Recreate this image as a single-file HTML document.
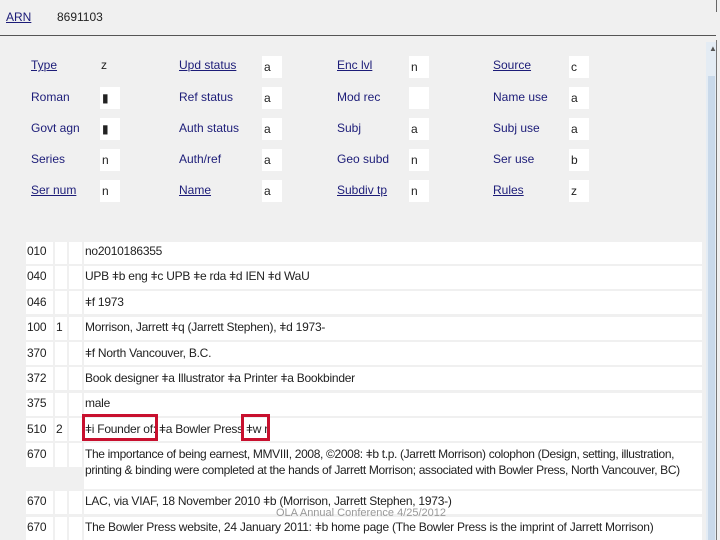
<!DOCTYPE html>
<html><head><meta charset="utf-8"><style>
*{margin:0;padding:0;box-sizing:border-box}
body{width:720px;height:540px;overflow:hidden;background:#f0f0f0;position:relative;font-family:"Liberation Sans",Arial,sans-serif;font-size:12px;color:#222}
.a{position:absolute;white-space:nowrap}
.l{color:#1c1c78}
.u{text-decoration:underline}
.v{position:absolute;background:#fff;width:20px;height:22px;padding:4px 0 0 2px}
.r{position:absolute;left:26px;width:676px;background:#fff}
.c{position:absolute;top:0;bottom:0;background:#f0f0f0;width:2px}
.t{position:absolute;left:26px;width:676px;padding-top:1px}
.t span{position:absolute;white-space:nowrap;letter-spacing:-0.25px}
.red{position:absolute;border:3px solid #c8102e}
</style></head><body>
<div class="a l u" style="left:6px;top:10px">ARN</div>
<div class="a" style="left:57px;top:10px">8691103</div>
<div class="a" style="left:0;top:35px;width:716px;height:1px;background:#555"></div>
<div class="a" style="left:716px;top:0;width:1px;height:12px;background:#666"></div>
<div class="a" style="left:716px;top:40px;width:1px;height:500px;background:#777"></div>
<div class="a" style="left:706px;top:42px;width:10px;height:498px;background:#e4ecf4"></div>
<div class="a" style="left:708px;top:76px;width:7px;height:464px;background:#c9d9ea"></div>
<div class="a" style="left:709px;top:44px;font-size:8px;color:#555">▲</div>

<div class="a l u" style="left:31px;top:58px">Type</div>
<div class="a l" style="left:31px;top:90px">Roman</div>
<div class="a l" style="left:31px;top:121px">Govt agn</div>
<div class="a l" style="left:31px;top:152px">Series</div>
<div class="a l u" style="left:31px;top:183px">Ser num</div>
<div class="a" style="left:101px;top:58px">z</div>
<div class="v" style="left:100px;top:87px">▮</div>
<div class="v" style="left:100px;top:118px">▮</div>
<div class="v" style="left:100px;top:149px">n</div>
<div class="v" style="left:100px;top:180px">n</div>

<div class="a l u" style="left:179px;top:58px">Upd status</div>
<div class="a l" style="left:179px;top:90px">Ref status</div>
<div class="a l" style="left:179px;top:121px">Auth status</div>
<div class="a l" style="left:179px;top:152px">Auth/ref</div>
<div class="a l u" style="left:179px;top:183px">Name</div>
<div class="v" style="left:262px;top:56px">a</div>
<div class="v" style="left:262px;top:87px">a</div>
<div class="v" style="left:262px;top:118px">a</div>
<div class="v" style="left:262px;top:149px">a</div>
<div class="v" style="left:262px;top:180px">a</div>

<div class="a l u" style="left:337px;top:58px">Enc lvl</div>
<div class="a l" style="left:337px;top:90px">Mod rec</div>
<div class="a l" style="left:337px;top:121px">Subj</div>
<div class="a l" style="left:337px;top:152px">Geo subd</div>
<div class="a l u" style="left:337px;top:183px">Subdiv tp</div>
<div class="v" style="left:409px;top:56px">n</div>
<div class="v" style="left:409px;top:87px"></div>
<div class="v" style="left:409px;top:118px">a</div>
<div class="v" style="left:409px;top:149px">n</div>
<div class="v" style="left:409px;top:180px">n</div>

<div class="a l u" style="left:493px;top:58px">Source</div>
<div class="a l" style="left:493px;top:90px">Name use</div>
<div class="a l" style="left:493px;top:121px">Subj use</div>
<div class="a l" style="left:493px;top:152px">Ser use</div>
<div class="a l u" style="left:493px;top:183px">Rules</div>
<div class="v" style="left:569px;top:56px">c</div>
<div class="v" style="left:569px;top:87px">a</div>
<div class="v" style="left:569px;top:118px">a</div>
<div class="v" style="left:569px;top:149px">b</div>
<div class="v" style="left:569px;top:180px">z</div>

<div class="r" style="top:242px;height:22px"><div class="c" style="left:27px"></div><div class="c" style="left:41px"></div><div class="c" style="left:56px"></div></div>
<div class="r" style="top:266px;height:23px"><div class="c" style="left:27px"></div><div class="c" style="left:41px"></div><div class="c" style="left:56px"></div></div>
<div class="r" style="top:291px;height:23px"><div class="c" style="left:27px"></div><div class="c" style="left:41px"></div><div class="c" style="left:56px"></div></div>
<div class="r" style="top:317px;height:23px"><div class="c" style="left:27px"></div><div class="c" style="left:41px"></div><div class="c" style="left:56px"></div></div>
<div class="r" style="top:342px;height:23px"><div class="c" style="left:27px"></div><div class="c" style="left:41px"></div><div class="c" style="left:56px"></div></div>
<div class="r" style="top:367px;height:23px"><div class="c" style="left:27px"></div><div class="c" style="left:41px"></div><div class="c" style="left:56px"></div></div>
<div class="r" style="top:393px;height:23px"><div class="c" style="left:27px"></div><div class="c" style="left:41px"></div><div class="c" style="left:56px"></div></div>
<div class="r" style="top:418px;height:23px"><div class="c" style="left:27px"></div><div class="c" style="left:41px"></div><div class="c" style="left:56px"></div></div>
<div class="r" style="top:443px;height:46px"><div class="c" style="left:27px"></div><div class="c" style="left:41px"></div><div class="c" style="left:56px"></div><div class="c" style="left:0;width:57px;top:24px"></div></div>
<div class="r" style="top:491px;height:23px"><div class="c" style="left:27px"></div><div class="c" style="left:41px"></div><div class="c" style="left:56px"></div></div>
<div class="r" style="top:517px;height:23px"><div class="c" style="left:27px"></div><div class="c" style="left:41px"></div><div class="c" style="left:56px"></div></div>

<div class="t" style="top:243px"><span style="left:1px">010</span><span style="left:59px">no2010186355</span></div>
<div class="t" style="top:268px"><span style="left:1px">040</span><span style="left:59px">UPB ǂb eng ǂc UPB ǂe rda ǂd IEN ǂd WaU</span></div>
<div class="t" style="top:294px"><span style="left:1px">046</span><span style="left:59px">ǂf 1973</span></div>
<div class="t" style="top:319px"><span style="left:1px">100</span><span style="left:30px">1</span><span style="left:59px">Morrison, Jarrett ǂq (Jarrett Stephen), ǂd 1973-</span></div>
<div class="t" style="top:345px"><span style="left:1px">370</span><span style="left:59px">ǂf North Vancouver, B.C.</span></div>
<div class="t" style="top:370px"><span style="left:1px">372</span><span style="left:59px">Book designer ǂa Illustrator ǂa Printer ǂa Bookbinder</span></div>
<div class="t" style="top:395px"><span style="left:1px">375</span><span style="left:59px">male</span></div>
<div class="t" style="top:421px"><span style="left:1px">510</span><span style="left:30px">2</span><span style="left:59px">ǂi Founder of: ǂa Bowler Press ǂw r</span></div>
<div class="t" style="top:446px"><span style="left:1px">670</span><span style="left:59px;letter-spacing:-0.35px">The importance of being earnest, MMVIII, 2008, ©2008: ǂb t.p. (Jarrett Morrison) colophon (Design, setting, illustration,</span></div>
<div class="t" style="top:462px"><span style="left:59px;letter-spacing:-0.35px">printing &amp; binding were completed at the hands of Jarrett Morrison; associated with Bowler Press, North Vancouver, BC)</span></div>
<div class="t" style="top:493px"><span style="left:1px">670</span><span style="left:59px">LAC, via VIAF, 18 November 2010 ǂb (Morrison, Jarrett Stephen, 1973-)</span></div>
<div class="t" style="top:519px"><span style="left:1px">670</span><span style="left:59px">The Bowler Press website, 24 January 2011: ǂb home page (The Bowler Press is the imprint of Jarrett Morrison)</span></div>

<div class="red" style="left:82px;top:414px;width:76px;height:27px"></div>
<div class="red" style="left:241px;top:414px;width:29px;height:27px"></div>

<div class="a" style="left:276px;top:507px;font-size:11px;color:#999">OLA Annual Conference 4/25/2012</div>
</body></html>
